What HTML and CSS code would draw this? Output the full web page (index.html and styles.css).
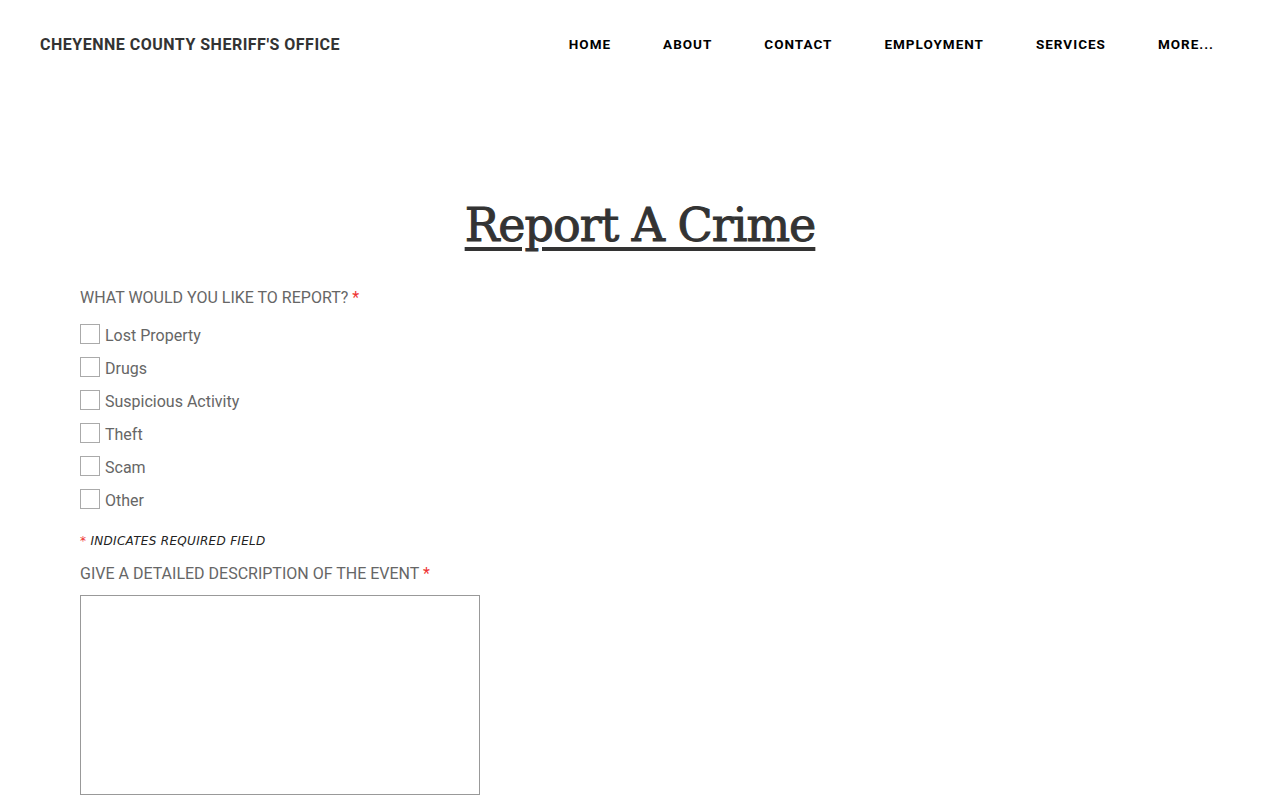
FILE: index.html
```html
<!DOCTYPE html>
<html lang="en">
<head>
    <meta charset="UTF-8">
    <title>Report A Crime - Cheyenne County Sheriff's Office</title>
    <link rel="stylesheet" href="styles.css">
</head>
<body>
    <div class="header">
        <div class="site-title">CHEYENNE COUNTY SHERIFF'S OFFICE</div>
        <ul class="nav">
            <li><a href="#">HOME</a></li>
            <li><a href="#">ABOUT</a></li>
            <li><a href="#">CONTACT</a></li>
            <li><a href="#">EMPLOYMENT</a></li>
            <li><a href="#">SERVICES</a></li>
            <li><a href="#">MORE...</a></li>
        </ul>
    </div>

    <div class="main">
        <h1 class="page-title">Report A Crime</h1>

        <form class="crime-form">
            <div class="form-field">
                <label class="field-label">WHAT WOULD YOU LIKE TO REPORT? <span class="req">*</span></label>
                <div class="options">
                    <label class="option"><input type="checkbox"> Lost Property</label>
                    <label class="option"><input type="checkbox"> Drugs</label>
                    <label class="option"><input type="checkbox"> Suspicious Activity</label>
                    <label class="option"><input type="checkbox"> Theft</label>
                    <label class="option"><input type="checkbox"> Scam</label>
                    <label class="option"><input type="checkbox"> Other</label>
                </div>
            </div>

            <div class="req-note"><span class="req">*</span> INDICATES REQUIRED FIELD</div>

            <div class="form-field">
                <label class="field-label">GIVE A DETAILED DESCRIPTION OF THE EVENT <span class="req">*</span></label>
                <textarea class="description"></textarea>
            </div>
        </form>
    </div>
</body>
</html>
```

FILE: styles.css
```css
body {
    margin: 0;
    background: #fff;
    font-family: Roboto, "Liberation Sans", Arial, sans-serif;
    color: #666;
}

.header {
    display: flex;
    justify-content: space-between;
    align-items: center;
    height: 88px;
    padding: 0 40px 0 40px;
}

.site-title {
    font-size: 16px;
    font-weight: bold;
    color: #333;
    letter-spacing: 0.5px;
}

.nav {
    display: flex;
    list-style: none;
    margin: 0;
    padding: 0;
}

.nav a {
    display: block;
    padding: 0 26px;
    font-size: 13.5px;
    font-weight: bold;
    letter-spacing: 1px;
    color: #000;
    text-decoration: none;
}

.main {
    padding: 0 80px;
}

.page-title {
    margin: 110px 0 36px;
    text-align: center;
    font-family: "DejaVu Serif", "Liberation Serif", serif;
    font-size: 46px;
    font-weight: normal;
    color: #333;
    -webkit-text-stroke: 1px #333;
    text-decoration: underline;
    text-decoration-thickness: 4px;
    text-underline-offset: 6px;
    letter-spacing: -1px;
}

.field-label {
    display: block;
    font-size: 16px;
    color: #666;
    margin-bottom: 18px;
}

.req {
    color: #e33;
}

.options {
    display: flex;
    flex-direction: column;
    gap: 13px;
}

.option {
    display: flex;
    align-items: flex-end;
    gap: 5px;
    font-size: 16px;
    color: #666;
    height: 20px;
}

.option input {
    appearance: none;
    margin: 0;
    width: 20px;
    height: 20px;
    border: 1px solid #aaa;
    background: #fff;
    box-sizing: border-box;
    position: relative;
    top: -1px;
}

.req-note {
    margin: 24px 0 16px;
    font-family: "DejaVu Sans", "Open Sans", sans-serif;
    font-style: italic;
    font-size: 12px;
    letter-spacing: 0.3px;
    color: #222;
}

.description {
    display: block;
    width: 400px;
    height: 200px;
    margin-top: -6px;
    border: 1px solid #999;
    box-sizing: border-box;
    resize: none;
}
```
